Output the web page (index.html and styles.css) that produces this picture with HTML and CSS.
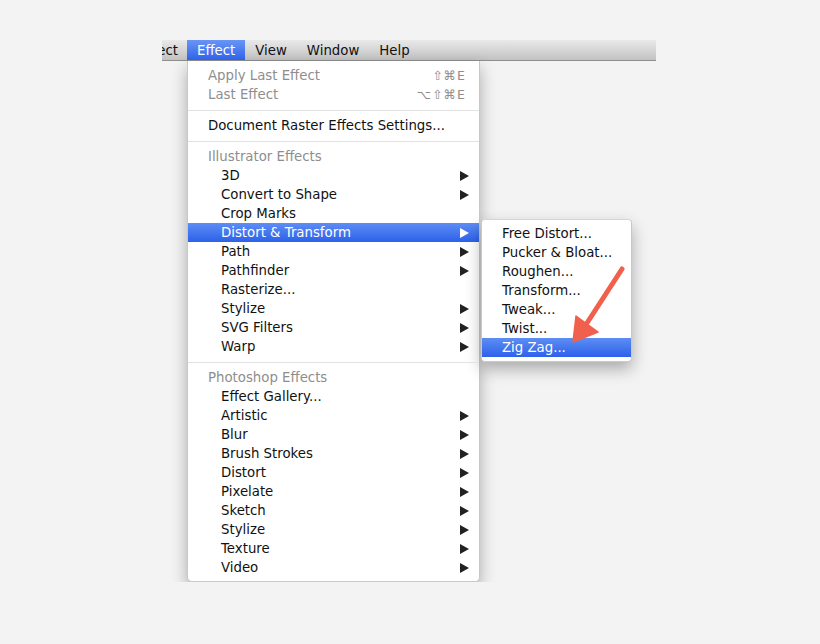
FILE: index.html
```html
<!DOCTYPE html>
<html lang="en">
<head>
  <meta charset="UTF-8">
  <title>Effect Menu</title>
  <link rel="stylesheet" href="styles.css">
</head>
<body>
  <div class="screen">
    <div class="menubar">
      <span class="bar-item cut">ect</span>
      <span class="bar-item active">Effect</span>
      <span class="bar-item">View</span>
      <span class="bar-item">Window</span>
      <span class="bar-item">Help</span>
    </div>

    <div class="menu main-menu">
      <div class="row disabled"><span>Apply Last Effect</span><span class="keys">⇧⌘E</span></div>
      <div class="row disabled"><span>Last Effect</span><span class="keys">⌥⇧⌘E</span></div>
      <div class="sep"></div>
      <div class="row"><span>Document Raster Effects Settings...</span></div>
      <div class="sep"></div>
      <div class="row heading">Illustrator Effects</div>
      <div class="row sub"><span>3D</span><i class="tri"></i></div>
      <div class="row sub"><span>Convert to Shape</span><i class="tri"></i></div>
      <div class="row sub"><span>Crop Marks</span></div>
      <div class="row sub selected open">
        <span>Distort &amp; Transform</span><i class="tri"></i>
        <div class="menu submenu">
          <div class="row"><span>Free Distort...</span></div>
          <div class="row"><span>Pucker &amp; Bloat...</span></div>
          <div class="row"><span>Roughen...</span></div>
          <div class="row"><span>Transform...</span></div>
          <div class="row"><span>Tweak...</span></div>
          <div class="row"><span>Twist...</span></div>
          <div class="row selected"><span>Zig Zag...</span></div>
        </div>
      </div>
      <div class="row sub"><span>Path</span><i class="tri"></i></div>
      <div class="row sub"><span>Pathfinder</span><i class="tri"></i></div>
      <div class="row sub"><span>Rasterize...</span></div>
      <div class="row sub"><span>Stylize</span><i class="tri"></i></div>
      <div class="row sub"><span>SVG Filters</span><i class="tri"></i></div>
      <div class="row sub"><span>Warp</span><i class="tri"></i></div>
      <div class="sep"></div>
      <div class="row heading">Photoshop Effects</div>
      <div class="row sub"><span>Effect Gallery...</span></div>
      <div class="row sub"><span>Artistic</span><i class="tri"></i></div>
      <div class="row sub"><span>Blur</span><i class="tri"></i></div>
      <div class="row sub"><span>Brush Strokes</span><i class="tri"></i></div>
      <div class="row sub"><span>Distort</span><i class="tri"></i></div>
      <div class="row sub"><span>Pixelate</span><i class="tri"></i></div>
      <div class="row sub"><span>Sketch</span><i class="tri"></i></div>
      <div class="row sub"><span>Stylize</span><i class="tri"></i></div>
      <div class="row sub"><span>Texture</span><i class="tri"></i></div>
      <div class="row sub"><span>Video</span><i class="tri"></i></div>
    </div>

    <!-- callout arrow pointing at Zig Zag -->
    <svg class="callout" width="70" height="90" viewBox="0 0 70 90">
      <line x1="60" y1="9" x2="25" y2="63" stroke="#f0604c" stroke-width="5" stroke-linecap="round"/>
      <polygon points="11,82 14,56 36,72" fill="#f0604c" stroke="#f0604c" stroke-width="1.5" stroke-linejoin="round"/>
    </svg>
  </div>
</body>
</html>
```

FILE: styles.css
```css
body {
  margin: 0;
  background: #f3f3f3;
  font-family: "DejaVu Sans", sans-serif;
  font-size: 13.3px;
  color: #111;
}
.screen {
  position: relative;
  width: 494px;
  margin: 40px 0 0 162px;
}
.menubar {
  display: flex;
  height: 21px;
  background: linear-gradient(#e9e9e9, #c2c2c2);
  border-bottom: 1px solid #8f8f8f;
  box-sizing: border-box;
}
.bar-item {
  padding: 1px 10px 0;
  line-height: 20px;
  color: #111;
}
.bar-item.cut {
  display: flex;
  justify-content: flex-end;
  width: 16px;
  padding: 1px 9px 0 0;
  overflow: hidden;
}
.bar-item.active {
  color: #fff;
  background: linear-gradient(#6a95f5, #2f62ea);
}
.menu {
  background: #fff;
  padding: 5px 0 4px;
  border: 1px solid #c9c9c9;
  border-top: none;
  border-radius: 0 0 5px 5px;
  box-shadow: 0 7px 16px rgba(0, 0, 0, 0.3);
}
.main-menu {
  width: 291px;
  margin-left: 25px;
}
.row {
  position: relative;
  display: flex;
  align-items: center;
  justify-content: space-between;
  height: 19px;
  padding: 0 10px 0 20px;
  white-space: nowrap;
}
.row.sub {
  padding-left: 33px;
}
.row.disabled,
.row.heading {
  color: #8e8e8e;
}
.keys {
  color: #8e8e8e;
  letter-spacing: 1px;
  font-size: 12.5px;
  padding-right: 3px;
}
.row.selected {
  color: #fff;
  background: linear-gradient(#5d8df4, #2d61ea);
}
.sep {
  height: 12px;
  position: relative;
}
.sep::after {
  content: "";
  position: absolute;
  left: 0;
  right: 0;
  top: 6px;
  border-top: 1px solid #e2e2e2;
}
.tri {
  width: 0;
  height: 0;
  border-top: 5px solid transparent;
  border-bottom: 5px solid transparent;
  border-left: 9px solid #222;
}
.row.selected .tri {
  border-left-color: #fff;
}
.submenu {
  position: absolute;
  left: 293px;
  top: -4px;
  width: 149px;
  padding-top: 4px;
  border-top: 1px solid #d6d6d6;
  border-radius: 4px;
  color: #111;
}
.submenu .row {
  padding-left: 20px;
}
.callout {
  position: absolute;
  left: 400px;
  top: 220px;
}
```
